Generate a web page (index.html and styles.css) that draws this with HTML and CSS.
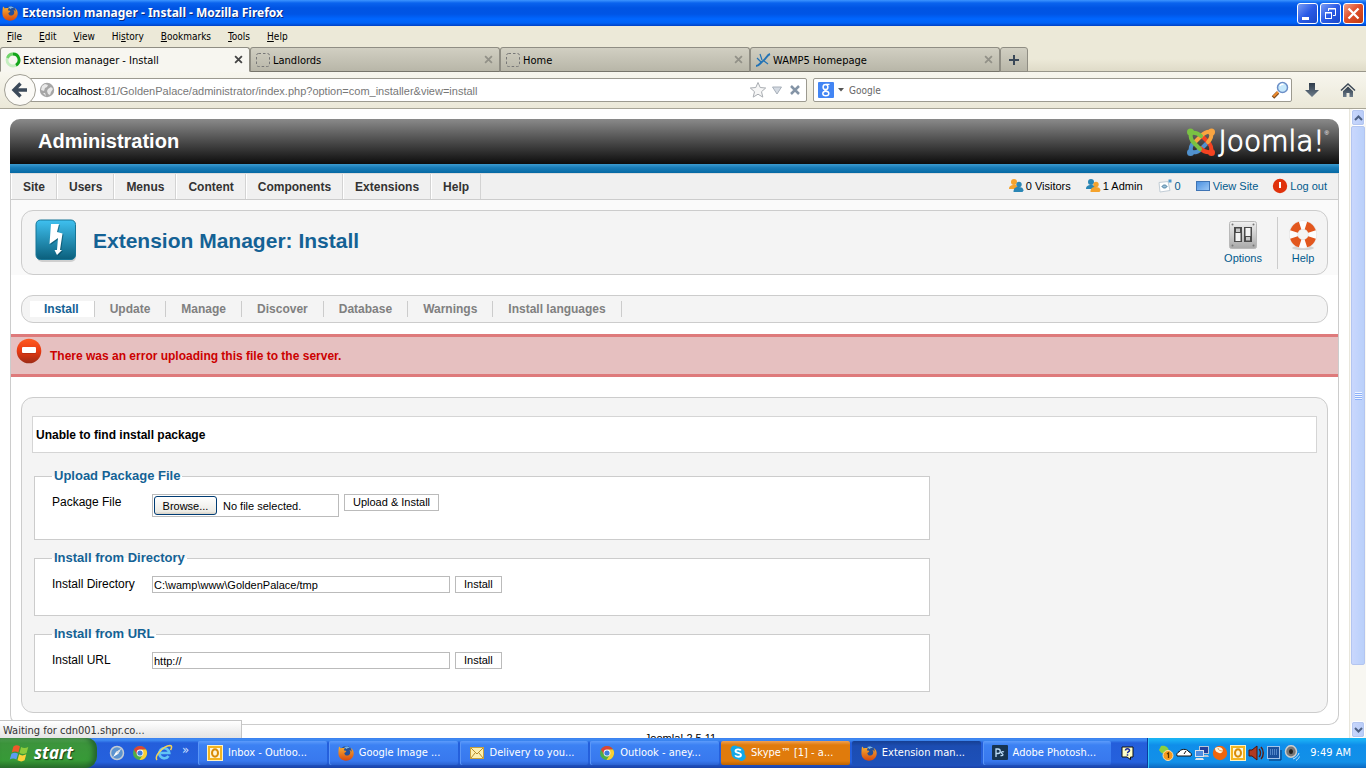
FILE: index.html
```html
<!DOCTYPE html>
<html lang="en">
<head>
<meta charset="utf-8">
<title>Extension manager - Install</title>
<link rel="stylesheet" href="styles.css">
</head>
<body>
<svg class="defs" aria-hidden="true">
  <defs>
    <linearGradient id="gFox" x1="0" y1="0" x2="0" y2="1"><stop offset="0" stop-color="#f9b233"/><stop offset="1" stop-color="#d8480d"/></linearGradient>
    <linearGradient id="gBolt" x1="0" y1="0" x2="0" y2="1"><stop offset="0" stop-color="#3fc1f0"/><stop offset="1" stop-color="#0b5f7c"/></linearGradient>
    <linearGradient id="gRed" x1="0" y1="0" x2="0" y2="1"><stop offset="0" stop-color="#ff5a20"/><stop offset=".5" stop-color="#e83a12"/><stop offset="1" stop-color="#9c2b16"/></linearGradient>
    <linearGradient id="gSteel" x1="0" y1="0" x2="0" y2="1"><stop offset="0" stop-color="#f0f0f0"/><stop offset="1" stop-color="#a8a8a8"/></linearGradient>
    <linearGradient id="gSlate" x1="0" y1="0" x2="0" y2="1"><stop offset="0" stop-color="#2e3b49"/><stop offset="1" stop-color="#6d7c8b"/></linearGradient>
    <linearGradient id="gScreen" x1="0" y1="0" x2="1" y2="1"><stop offset="0" stop-color="#4a90e0"/><stop offset="1" stop-color="#9cc8f6"/></linearGradient>
  </defs>
  <symbol id="firefox" viewBox="0 0 16 16">
    <circle cx="8.200" cy="7.500" r="6.500" fill="#24509a"/>
    <path d="M6 2c2-1 5-.6 6 1-2-.3-3 .3-3.500 1z" fill="#7ab4e6"/>
    <path d="M1 1.500c.8.500 1.500 1.300 1.800 2C4 2.800 5.500 3 7 3.500 6 4.200 5.800 5 6 5.600c1 .1 2 .2 2.300.6-.2 1-1.300 1.200-2 1.800C6.500 10.500 9 11.200 11 10c1.700-1.200 1.600-3.500.5-5 1 .3 1.800 1 2.100 2 .2-1.500-.2-3-1.200-4.300C15 4 16 6.500 15.700 9c-.5 4-3.700 6.700-7.700 6.700C3.500 15.700.4 12.500.4 8.300.4 6 .6 3.500 1 1.500z" fill="url(#gFox)"/>
  </symbol>
  <symbol id="chrome" viewBox="0 0 16 16">
    <circle cx="8" cy="8" r="7" fill="#4fae46"/>
    <path d="M1.900 4.500A7 7 0 0 1 14.100 4.500L8 5 5 9.500z" fill="#dc4437"/>
    <path d="M14.100 4.500A7 7 0 0 1 7.500 15L11 9.500 9 4.500z" fill="#f9cf35"/>
    <circle cx="8" cy="8" r="3.400" fill="#fff"/><circle cx="8" cy="8" r="2.600" fill="#3d7edb"/>
  </symbol>
  <symbol id="outlook" viewBox="0 0 16 16">
    <rect x=".5" y=".5" width="15" height="15" fill="#f4b521" stroke="#fff2c0"/>
    <rect x="3" y="3" width="10" height="10" fill="#fff6d8"/>
    <ellipse cx="8" cy="8" rx="3" ry="3.700" fill="none" stroke="#d98b06" stroke-width="2"/>
  </symbol>
  <symbol id="close" viewBox="0 0 8 8"><path d="M1 1l6 6M7 1L1 7" stroke="currentColor" stroke-width="1.600"/></symbol>
  <symbol id="blank" viewBox="0 0 16 16"><rect x="1.500" y="1.500" width="13" height="13" rx="2" fill="none" stroke="#777" stroke-dasharray="2.500 2"/></symbol>
  <symbol id="people" viewBox="0 0 16 16">
    <g fill="var(--back)"><circle cx="6" cy="4" r="3"/><path d="M1 11c0-3 2-4 5-4s5 1 5 4z"/></g>
    <g fill="var(--front)"><circle cx="11" cy="6.500" r="2.700"/><path d="M5.500 14c0-4 2-5 5-5s5 1 5 3.500l-1 1.500z"/></g>
  </symbol>
</svg>

<header class="browser">
  <div class="titlebar">
    <svg class="i16"><use href="#firefox"/></svg>
    <span class="title">Extension manager - Install - Mozilla Firefox</span>
    <div class="winbtns">
      <button aria-label="Minimize"><svg viewBox="0 0 19 19"><rect x="4" y="13" width="7" height="3" fill="#fff"/></svg></button>
      <button aria-label="Restore"><svg viewBox="0 0 19 19" fill="none" stroke="#fff"><path d="M7.500 7V4.500h7v7H12M7 5h8"/><rect x="4.500" y="8.500" width="6" height="6"/><path d="M4 9h7"/></svg></button>
      <button class="x" aria-label="Close"><svg viewBox="0 0 19 19"><path d="M4.500 4.500l10 10M14.500 4.500l-10 10" stroke="#fff" stroke-width="2.300"/></svg></button>
    </div>
  </div>
  <nav class="menubar" aria-label="Browser menu">
    <button><u>F</u>ile</button><button><u>E</u>dit</button><button><u>V</u>iew</button><button>Hi<u>s</u>tory</button><button><u>B</u>ookmarks</button><button><u>T</u>ools</button><button><u>H</u>elp</button>
  </nav>
  <div class="tabs">
    <div class="tab active"><svg class="i16" viewBox="0 0 16 16" fill="none" stroke-width="2.800"><circle cx="8" cy="8" r="6" stroke="#c5eec0"/><path d="M8 2a6 6 0 0 1 3 11.200" stroke="#14a51b"/><path d="M8 2a6 6 0 0 0-5.500 4" stroke="#72d46b"/></svg><button class="tabname">Extension manager - Install</button><button class="tabx" aria-label="Close tab"><svg><use href="#close"/></svg></button></div>
    <div class="tab"><svg class="i16"><use href="#blank"/></svg><button class="tabname">Landlords</button><button class="tabx" aria-label="Close tab"><svg><use href="#close"/></svg></button></div>
    <div class="tab"><svg class="i16"><use href="#blank"/></svg><button class="tabname">Home</button><button class="tabx" aria-label="Close tab"><svg><use href="#close"/></svg></button></div>
    <div class="tab"><svg class="i16" viewBox="0 0 16 16" fill="none" stroke="#2373b5"><path d="M1 14c3 0 4-3 7-5s4-6 7-7" stroke-width="2"/><path d="M6 10L2 6M7 8L5 2M9 9l4 3" stroke-width="1.200"/></svg><button class="tabname">WAMP5 Homepage</button><button class="tabx" aria-label="Close tab"><svg><use href="#close"/></svg></button></div>
    <button class="newtab" aria-label="New tab"><svg viewBox="0 0 12 12"><path d="M6 1v10M1 6h10" stroke="#3a4858" stroke-width="2"/></svg></button>
  </div>
  <div class="toolbar">
    <button class="back" aria-label="Back"><svg viewBox="0 0 18 18"><path d="M9.500 2.500L3 9l6.500 6.500M4 9h12" fill="none" stroke="#3c4a5a" stroke-width="3.400"/></svg></button>
    <div class="urlbox">
      <svg class="i16" viewBox="0 0 16 16"><circle cx="8" cy="8" r="7.200" fill="#a6a6a6"/><path d="M3 4l3-2 3 1-1 2-2 1-1 3-3-1zM9 7l3-2 2 2-2 3-1 3-2-1-1-3zM4 11l2 0 1 3z" fill="#e9e9e9"/></svg>
      <div class="url" role="textbox" aria-label="Address"><b>localhost</b>:81/GoldenPalace/administrator/index.php?option=com_installer&amp;view=install</div>
      <svg class="i18" viewBox="0 0 18 18"><path d="M9 1.500l2.200 5 5.500.5-4.200 3.700 1.300 5.400L9 13.200l-4.800 2.900 1.300-5.400L1.300 7l5.500-.5z" fill="#f6f6f6" stroke="#a9adb2"/></svg>
      <svg class="i16" viewBox="0 0 16 16"><path d="M3.500 5h9L8 12z" fill="#d4dae2" stroke="#a8b0ba"/></svg>
      <svg class="i16" viewBox="0 0 16 16"><path d="M4 4l8 8M12 4l-8 8" stroke="#8494a6" stroke-width="2.500"/></svg>
    </div>
    <div class="searchbox">
      <svg class="i16" viewBox="0 0 16 16"><rect width="16" height="16" rx="1" fill="#4285f4"/><ellipse cx="7.500" cy="5" rx="2.400" ry="2.600" fill="none" stroke="#fff" stroke-width="1.500"/><ellipse cx="7.800" cy="11.500" rx="3" ry="2.300" fill="none" stroke="#fff" stroke-width="1.500"/><path d="M8 2.300h3.500M7 7.500c-1 1.500 2 1 2.500 2.500" fill="none" stroke="#fff" stroke-width="1.300"/></svg>
      <svg class="caret" viewBox="0 0 6 4"><path d="M0 0h6L3 3.500z" fill="#555"/></svg>
      <input type="text" placeholder="Google" aria-label="Search">
      <svg class="i18" viewBox="0 0 18 18"><path d="M2 16.500l5-5" stroke="#7c4a1d" stroke-width="3.500"/><path d="M2.500 15.500l4.500-4.500" stroke="#f08b2c" stroke-width="2"/><circle cx="11.500" cy="6.500" r="5" fill="#c6e8fb" stroke="#6c8fc7" stroke-width="1.500"/><path d="M9 5c.5-1.500 2-2 3.500-1.500" stroke="#fff" stroke-width="1.500" fill="none"/></svg>
    </div>
    <button class="tool" aria-label="Downloads"><svg class="i16" viewBox="0 0 16 16"><path d="M5 1h6v7h4l-7 7-7-7h4z" fill="url(#gSlate)"/></svg></button>
    <button class="tool" aria-label="Home"><svg class="i16" viewBox="0 0 16 16"><path d="M1 8.500L8 2l7 6.500" fill="none" stroke="#3c4856" stroke-width="1.500"/><path d="M3 9.200L8 4.500l5 4.700V15H9.500v-4h-3v4H3z" fill="url(#gSlate)"/></svg></button>
  </div>
</header>

<div class="viewport">
  <div class="page">
    <div class="shell">
      <div class="brand">
        <span class="sitename">Administration</span>
        <div class="logo">
          <svg viewBox="0 0 30 30" fill="none" stroke-width="4" stroke-linecap="round" stroke-linejoin="round">
            <path d="M21 16l-6 6c-3 3-6 4-10 3" stroke="#5091cd"/>
            <path d="M5 25c-1-4 0-7 3-10" stroke="#5091cd"/>
            <path d="M14 21c4 4 7 5 11 4 1-4 0-7-3-10l-5-5" stroke="#f44321"/>
            <path d="M9 15l6-6c3-3 6-5 10-4 1 4 0 7-3 10" stroke="#f9a541"/>
            <path d="M15 9c-3-3-6-4-10-3-1 4 0 7 3 10l6 6" stroke="#7ac143"/>
            <g stroke="none"><circle cx="4.500" cy="5" r="3.500" fill="#7ac143"/><circle cx="25.500" cy="5" r="3.500" fill="#f9a541"/><circle cx="25.500" cy="25.500" r="3.500" fill="#f44321"/><circle cx="4.500" cy="25.500" r="3.500" fill="#5091cd"/></g>
          </svg>
          <span>Joomla!</span><sup>®</sup>
        </div>
      </div>
      <div class="stripe"></div>
      <div class="adminbar">
        <nav class="adminmenu" aria-label="Administration">
          <a href="#">Site</a><a href="#">Users</a><a href="#">Menus</a><a href="#">Content</a><a href="#">Components</a><a href="#">Extensions</a><a href="#">Help</a>
        </nav>
        <div class="status">
          <span class="st visitors"><svg class="i16"><use href="#people"/></svg>0 Visitors</span>
          <span class="st admins"><svg class="i16"><use href="#people"/></svg>1 Admin</span>
          <a class="st" href="#"><svg class="i16" viewBox="0 0 16 16"><path d="M2 4.500l9-1 2 9-10 1.500z" fill="#fff" stroke="#c2cdd6"/><path d="M5 8.500c1-2 4-2 5 0-1 2-4 2-5 0z" fill="#9cc0d8" stroke="#4c7f9f"/><rect x="11.500" y="1.500" width="3" height="3" fill="#4b98cc"/></svg>0</a>
          <a class="st" href="#"><svg class="i16" viewBox="0 0 16 16"><rect x="1.500" y="3.500" width="13" height="9" fill="url(#gScreen)" stroke="#3f74b4"/></svg>View Site</a>
          <a class="st" href="#"><svg class="i16" viewBox="0 0 16 16"><circle cx="8" cy="8" r="7.200" fill="#e0320c"/><path d="M8 4v6" stroke="#fff" stroke-width="2"/></svg>Log out</a>
        </div>
      </div>

      <section class="heading">
        <div class="headbox">
          <svg class="bolt" viewBox="0 0 42 44"><rect x="2" y="4" width="39" height="39" rx="5" fill="#000" opacity=".15"/><rect x="1" y="1" width="39.500" height="39.500" rx="4.500" fill="url(#gBolt)" stroke="#167596"/><path d="M17 6h8l-2 8 5.500 1.500L26 32h2l-5 5-2.500-5H23l1-12-8.500 6z" fill="#033c50" opacity=".5"/><path d="M16 5h8l-2 8 5.500 1.500L25 31h2l-5 5-2.500-5H22l1-12-8.500 6z" fill="#fff"/></svg>
          <h1>Extension Manager: Install</h1>
          <div class="actions">
            <a href="#"><svg viewBox="0 0 32 32"><rect x="2.500" y="2.500" width="27" height="27" rx="2" fill="url(#gSteel)" stroke="#b9b9b9"/><g fill="#777"><circle cx="5.500" cy="5.500" r="1"/><circle cx="26.500" cy="5.500" r="1"/><circle cx="5.500" cy="26.500" r="1"/><circle cx="26.500" cy="26.500" r="1"/></g><path d="M7 8h8v15H7zM17 8h8v15h-8z" fill="#4a4a4a"/><path d="M8.500 14h5v8h-5zM18.500 9h5v8h-5z" fill="#f4f4f4"/><path d="M9 9.500h4V13H9zM19 18h4v3.500h-4z" fill="#c8c8c8"/></svg>Options</a>
            <a class="help" href="#"><svg viewBox="0 0 32 32"><ellipse cx="16" cy="29" rx="11" ry="2" fill="#d4d4d4"/><circle cx="16" cy="15.500" r="9.500" fill="none" stroke="#dfdfdf" stroke-width="9"/><circle cx="16" cy="15.500" r="9.500" fill="none" stroke="#fdfdfd" stroke-width="8"/><circle cx="16" cy="15.500" r="9.500" fill="none" stroke="#e2571e" stroke-width="8" pathLength="40" stroke-dasharray="6 4" stroke-dashoffset="-2"/></svg>Help</a>
          </div>
        </div>
      </section>

      <nav class="submenu" aria-label="Extension manager">
        <a class="on" href="#">Install</a><a href="#">Update</a><a href="#">Manage</a><a href="#">Discover</a><a href="#">Database</a><a href="#">Warnings</a><a href="#">Install languages</a>
      </nav>

      <div class="error" role="alert">
        <svg viewBox="0 0 26 26"><circle cx="13" cy="13" r="12.300" fill="url(#gRed)"/><rect x="6" y="9" width="14" height="7" rx="1" fill="#a52a12" opacity=".6"/><rect x="6" y="9" width="14" height="6" rx="1" fill="#fff"/></svg>
        <span>There was an error uploading this file to the server.</span>
      </div>

      <main class="panel">
        <p class="message">Unable to find install package</p>
        <form class="forms">
          <fieldset>
            <legend>Upload Package File</legend>
            <div class="row"><label for="pkg">Package File</label>
              <div class="file"><input type="file" id="pkg"><label for="pkg" class="browse">Browse...</label><span>No file selected.</span></div>
              <button type="button">Upload &amp; Install</button></div>
          </fieldset>
          <fieldset>
            <legend>Install from Directory</legend>
            <div class="row"><label for="dir">Install Directory</label><input type="text" id="dir" value="C:\wamp\www\GoldenPalace/tmp"><button type="button">Install</button></div>
          </fieldset>
          <fieldset>
            <legend>Install from URL</legend>
            <div class="row"><label for="url">Install URL</label><input type="text" id="url" value="http://"><button type="button">Install</button></div>
          </fieldset>
        </form>
      </main>
    </div>
    <footer class="foot">Joomla! 2.5.11</footer>
  </div>
  <div class="scrollbar">
    <div class="sbtn"><svg viewBox="0 0 9 6"><path d="M1 5l3.500-3.500L8 5" fill="none" stroke="#4d6185" stroke-width="2"/></svg></div>
    <div class="thumb"><i></i></div>
    <div class="track"></div>
    <div class="sbtn"><svg viewBox="0 0 9 6"><path d="M1 1l3.500 3.500L8 1" fill="none" stroke="#4d6185" stroke-width="2"/></svg></div>
  </div>
  <div class="waiting">Waiting for cdn001.shpr.co...</div>
</div>

<footer class="taskbar">
  <button class="start"><svg viewBox="0 0 20 20"><path d="M4 4c2-1.500 4-1.500 6 0L8.500 9.500c-2-1.300-4-1.300-6 0z" fill="#f0592a"/><path d="M11 4.500c2 1.300 4 1.300 6.500 0L16 10c-2 1.300-4 1.300-6.500 0z" fill="#8ccb3c"/><path d="M2.200 10.700c2-1.300 4-1.300 6 0L6.700 16c-2-1.300-4-1.300-6 0z" fill="#5c9cf2"/><path d="M9.200 11.200c2 1.300 4 1.300 6.500 0l-1.500 5.500c-2 1.300-4 1.300-6.500 0z" fill="#fbd13a"/></svg>start</button>
  <div class="quick">
    <button aria-label="Safari"><svg class="i16" viewBox="0 0 16 16"><circle cx="8" cy="8" r="6.500" fill="#5c93cf" stroke="#c3cbd5" stroke-width="1.500"/><path d="M12 4L9 9 4 12l3-5z" fill="#fff"/><path d="M12 4L9 9 7 7z" fill="#d8dde4"/></svg></button>
    <button aria-label="Chrome"><svg class="i16"><use href="#chrome"/></svg></button>
    <button aria-label="Internet Explorer"><svg class="i18" viewBox="0 0 18 18"><path d="M13.500 12a5 5 0 1 1 .8-3H5" fill="none" stroke="#62c3f5" stroke-width="2.700"/><path d="M2 16C-1 12 8 2 15 1.500c2.500 0 1.500 3 .5 4.500" fill="none" stroke="#f7d253" stroke-width="1.500"/></svg></button>
    <span class="more">»</span>
  </div>
  <div class="tasks">
    <button><svg class="i16"><use href="#outlook"/></svg>Inbox - Outloo...</button>
    <button><svg class="i16"><use href="#firefox"/></svg>Google Image ...</button>
    <button><svg class="i16" viewBox="0 0 16 16"><rect x="1.500" y="2.500" width="13" height="11" fill="#fdf0b0" stroke="#c9a13c"/><path d="M2 3l6 6 6-6M2 13l4-5M14 13l-4-5" fill="none" stroke="#b78d2f"/></svg>Delivery to you...</button>
    <button><svg class="i16"><use href="#chrome"/></svg>Outlook - aney...</button>
    <button class="flash"><svg class="i16" viewBox="0 0 16 16"><path d="M4.500.5a4 4 0 0 1 3 1A6.500 6.500 0 0 1 14.500 9a4 4 0 0 1-6 5.500A6.500 6.500 0 0 1 1.500 7 4 4 0 0 1 4.500.5z" fill="#12a8e8"/><path d="M10.800 5.500C10 3.800 5.500 3.800 5.500 6c0 2.500 5.500 1.300 5.500 4 0 2.300-5 2.300-5.800.2" fill="none" stroke="#fff" stroke-width="1.800"/></svg>Skype™ [1] - a...</button>
    <button class="pressed"><svg class="i16"><use href="#firefox"/></svg>Extension man...</button>
    <button><svg class="i16" viewBox="0 0 16 16"><rect width="16" height="15" rx="1" fill="#173450"/><path d="M4 12V4h2a2 2 0 0 1 0 4.500H4M12 7c-2-1-3.500.5-2 1.500s1.500 2.500-1.500 2" fill="none" stroke="#bcdcf7" stroke-width="1.300"/></svg>Adobe Photosh...</button>
  </div>
  <svg class="helpicon" viewBox="0 0 14 14"><path d="M1 1h11v10H9.500v2.500L6 11H1z" fill="#ffffc8" stroke="#111"/><path d="M4.500 4.500c0-2.500 4-2.500 4 0 0 1.300-2 1-2 2.700M6.500 8.200v1.500" fill="none" stroke="#1a2a9a" stroke-width="1.500"/></svg>
  <div class="tray">
    <svg class="i16" viewBox="0 0 16 16"><path d="M3 1c5-1 8 2 8 6-4 3-8 2-10-2z" fill="#8bcf3f"/><circle cx="10" cy="10.500" r="5" fill="#f79a1e" stroke="#ffe0a8"/><path d="M9 9l1.500-1v5" fill="none" stroke="#5b3300" stroke-width="1.300"/></svg>
    <svg class="i16" viewBox="0 0 16 16"><path d="M1 11c-1-2 1-4 2-4 1-3 8-4 10 0 2 0 3 3 2 4z" fill="#fff" stroke="#111"/><path d="M8 9l2-3" stroke="#111"/></svg>
    <svg class="i16" viewBox="0 0 16 16"><rect x="5.500" y="1.500" width="9" height="7" fill="#223f9c" stroke="#b8c5d6"/><path d="M8 10h6l1 2H8z" fill="#b8c5d6"/><rect x="1.500" y="5.500" width="8" height="6" fill="#4f8de0" stroke="#dde4ec"/><path d="M2 13h7l1 2H1z" fill="#dde4ec"/></svg>
    <svg class="i16" viewBox="0 0 16 16"><circle cx="8" cy="8" r="7.200" fill="#ee650c"/><path d="M3 3c3-2 7-1 8 2 0 3-3 4-5 2.500C4 7 3 5.500 3 3z" fill="#fff3dc"/><path d="M6 3c0 2 2 3 5 3" stroke="#e4a055" fill="none"/></svg>
    <svg class="i16"><use href="#outlook"/></svg>
    <svg class="i16" viewBox="0 0 16 16"><path d="M1 5h3l5-4v14l-5-4H1z" fill="#b03a24" stroke="#4f120b"/><path d="M11 4c2 2 2 6 0 8M13 2c3 3 3 9 0 12" fill="none" stroke="#5c1c12" stroke-width="1.400"/></svg>
    <svg class="i16" viewBox="0 0 16 16"><rect x="1.500" y="1.500" width="12" height="12" fill="#1b519d" stroke="#a4c4e8"/><path d="M4 5h7M4 7h7M4 9h7" stroke="#8cbdf2" stroke-dasharray="1 1"/><path d="M3 15h12V5" stroke="#0b2e6b" fill="none"/></svg>
    <svg class="i16" viewBox="0 0 16 16"><ellipse cx="7" cy="6.500" rx="5.500" ry="5.800" fill="#777" stroke="#ccc" stroke-width="1.500"/><ellipse cx="7" cy="6.500" rx="2" ry="2.500" fill="#222"/><path d="M9 14c3-1 5-3 6-6M12 15.500c2-1 3-3 3.500-4" fill="none" stroke="#c6e2fb"/></svg>
    <time>9:49 AM</time>
  </div>
</footer>
</body>
</html>
```
FILE: styles.css
```css
* { box-sizing: border-box; }
html, body { height: 100%; margin: 0; }
body {
  display: flex;
  flex-direction: column;
  overflow: hidden;
  background: #fff;
  color: #000;
  font: 11px/14px "Liberation Sans", Arial, sans-serif;
}
button, input { font: inherit; color: inherit; margin: 0; }
button { padding: 0; border: 0; background: none; white-space: nowrap; }
a { color: #025a8d; text-decoration: none; }
svg { display: block; flex: none; }
.defs { position: absolute; width: 0; height: 0; }
.i16 { width: 16px; height: 16px; }
.i18 { width: 18px; height: 18px; }

/* Browser window */
.browser, .taskbar, .waiting { font-family: "DejaVu Sans Condensed", "Liberation Sans", sans-serif; font-size: 11px; }
.browser { flex: none; background: #ece9d8; }
.titlebar {
  display: flex;
  align-items: center;
  gap: 4px;
  height: 26px;
  padding: 0 2px;
  background: linear-gradient(#3d95ff 0, #0a63ee 3px, #0054e3 8px, #0055e5 14px, #0066ff 19px, #0062f5 23px, #0040c4 26px);
}
.title { color: #fff; font: bold 12px/16px "Noto Sans", "Open Sans", sans-serif; text-shadow: 1px 1px 0 #0a2a80; }
.winbtns { display: flex; gap: 2px; margin-left: auto; }
.winbtns button { width: 21px; height: 21px; border: 1px solid #fff; border-radius: 3px; background: linear-gradient(135deg, #7a9cf4, #2a5be6 50%, #1a48c8); }
.winbtns .x { background: linear-gradient(135deg, #f0a088, #e0502c 45%, #c03a10); }
.menubar { display: flex; gap: 17px; height: 21px; padding: 0 7px; align-items: center; font-size: 10px; }
.tabs { display: flex; height: 25px; background: linear-gradient(#ece9d8 12px, #dfdbc8); border-bottom: 1px solid #98968a; }
.tab {
  display: flex;
  align-items: center;
  width: 250px;
  height: 25px;
  padding: 0 6px 0 4px;
  border: 1px solid #8f8d83;
  border-bottom-color: #77756b;
  border-radius: 3px 3px 0 0;
  background: linear-gradient(#d1cfc2, #b8b6a8);
  color: #929188;
}
.tab.active { background: #f7f6f0; border-bottom-color: #f7f6f0; color: #444; }
.tabname { flex: 1; text-align: left; color: #000; padding: 2px 0 0 2px; }
.tabx svg { width: 9px; height: 9px; }
.newtab { display: grid; place-items: center; width: 28px; height: 25px; border: 1px solid #8f8d83; border-radius: 3px 3px 0 0; background: linear-gradient(#d1cfc2, #b8b6a8); }
.newtab svg { width: 12px; height: 12px; }
.toolbar { display: flex; align-items: center; height: 37px; padding: 0 10px 0 4px; background: linear-gradient(#f7f6ee, #ebe8d8); border-bottom: 1px solid #a8a597; }
.back { z-index: 1; display: grid; place-items: center; width: 32px; height: 32px; border: 1px solid #a09e94; border-radius: 50%; background: #fbfaf6; }
.back svg { width: 18px; height: 18px; }
.urlbox, .searchbox { display: flex; align-items: center; height: 24px; border: 1px solid #9c9a90; border-radius: 2px; background: #fff; }
.urlbox { flex: 790 1 0; gap: 2px; margin-left: -8px; padding: 0 3px 0 10px; }
.url { flex: 1; padding: 2px 0 0 1px; color: #777; font-family: "Liberation Sans", Arial, sans-serif; overflow: hidden; white-space: nowrap; }
.url b { color: #000; font-weight: normal; }
.searchbox { flex: 487 1 0; margin: 0 12px 0 6px; padding: 0 2px 0 4px; }
.caret { width: 6px; height: 4px; margin: 0 5px 0 4px; }
.searchbox input { flex: 1; border: 0; outline: 0; padding: 2px 0 0; background: none; font-size: 10px; }
.searchbox input::placeholder { color: #666; opacity: 1; }
.tool + .tool { margin-left: 20px; }

/* Scrolled page */
.viewport { position: relative; flex: 1; min-height: 0; display: flex; overflow: hidden; }
.page { flex: 1; padding: 10px; }
.shell { border: 1px solid #ccc; border-top: 0; border-radius: 10px; }
.brand, .stripe, .adminbar, .heading { margin: 0 -1px; }
.brand {
  display: flex;
  align-items: center;
  justify-content: space-between;
  height: 45px;
  padding: 0 10px 0 28px;
  border-radius: 10px 10px 0 0;
  background: linear-gradient(#8a8a8a, #4b4b4b 50%, #0d0d0d);
  color: #fff;
}
.sitename { font: bold 20px/24px "Liberation Sans", Arial, sans-serif; padding-bottom: 2px; }
.logo { display: flex; align-items: center; }
.logo svg { width: 30px; height: 30px; margin-right: 3px; }
.logo span { font: 200 28px/30px "DejaVu Sans", "DejaVu Sans Light", sans-serif; -webkit-text-stroke: 1px #fff; }
.logo sup { align-self: flex-start; font-size: 6px; line-height: 12px; }
.stripe { height: 9px; background: linear-gradient(#3b9bd0, #1a7db8 40%, #0569a4); }
.adminbar { display: flex; justify-content: space-between; height: 27px; border: 1px solid #ccc; border-top-color: #ddd; background: #f0f0f0; }
.adminmenu { display: flex; }
.adminmenu a { padding: 1px 11px 0; border-right: 1px solid #d3d3d3; border-left: 1px solid #fff; color: #333; font-weight: bold; font-size: 12px; line-height: 25px; }
.status { display: flex; align-items: center; gap: 14px; padding: 0 11px 2px 0; }
.st { display: flex; align-items: center; gap: 2px; }
.visitors { --back: #f5a32c; --front: #2a86b5; }
.admins { --back: #2a86b5; --front: #f5a32c; }
.heading { padding: 10px 10px 0; border: solid #ccc; border-width: 0 1px; background: #fafafa; }
.headbox, .submenu, .panel { border: 1px solid #ccc; border-radius: 12px; background: #f4f4f4; }
.headbox { display: flex; align-items: center; height: 65px; padding: 0 8px 0 13px; }
.bolt { width: 42px; height: 44px; align-self: flex-start; margin-top: 8px; }
h1 { flex: 1; margin: 0; padding: 0 0 4px 16px; color: #146295; font-size: 21px; line-height: 26px; }
.actions { display: flex; text-align: center; }
.actions a { display: flex; flex-direction: column; align-items: center; height: 52px; padding: 2px 15px 0; line-height: 14px; }
.actions svg { width: 32px; height: 32px; }
.actions .help { border-left: 1px solid #ccc; padding: 2px 0 0 9px; }
.submenu { display: flex; align-items: center; height: 28px; margin: 20px 10px 11px; padding: 0 8px; }
.submenu a { padding: 0 15px; border-right: 1px solid #ccc; color: #808080; font-weight: bold; font-size: 12px; line-height: 16px; }
.submenu .on { background: #fff; color: #146295; padding-left: 14px; }
.error { display: flex; align-items: flex-start; gap: 8px; padding: 1px 5px 0; height: 43px; border: solid #de7a7b; border-width: 3px 0; background: #e6c0c0; color: #c00; font-weight: bold; font-size: 12px; }
.error svg { width: 26px; height: 26px; }
.error span { padding-top: 10px; line-height: 16px; }
.panel { margin: 20px 10px 11px; padding: 18px 10px 20px; }
.message { margin: 0 0 15px; padding: 1px 3px 0; border: 1px solid #d5d5d5; background: #fff; line-height: 34px; font-weight: bold; font-size: 12px; }
.forms { width: 70%; }
fieldset { margin: 0 2px 10px; padding: 10px 17px 0; border: 1px solid #ccc; background: #fff; height: 66px; }
fieldset:first-of-type { height: 72px; }
fieldset:last-of-type { margin-bottom: 0; }
legend { padding: 0 2px; color: #146295; font-size: 13px; font-weight: bold; line-height: 16px; }
.row { display: flex; align-items: flex-start; gap: 5px; }
.row > label { width: 95px; font-size: 12px; line-height: 16px; }
.row > input, .row > button { height: 17px; border: 1px solid #bbb; background: #fff; line-height: 15px; }
.row > input { width: 298px; padding: 0 1px; }
.row > button { padding: 0 8px; }
.file { display: flex; align-items: center; gap: 6px; width: 187px; height: 23px; border: 1px solid #bbb; padding: 0 1px; }
.file input { position: absolute; opacity: 0; width: 1px; height: 1px; }
.browse { width: 63px; height: 19px; border: 1px solid #003c74; border-radius: 3px; background: linear-gradient(#fff, #ecebe5 85%, #d6d0c5); text-align: center; line-height: 18px; }
.foot { padding: 6px 0 0 12px; text-align: center; }

.scrollbar { display: flex; flex-direction: column; width: 17px; padding: 0 1px; background: #f8f7f2; border-left: 1px solid #e8e6dc; }
.sbtn { display: grid; place-items: center; height: 17px; border: 1px solid #fff; border-radius: 3px; background: linear-gradient(90deg, #c9d7fc, #b8ccf8); outline: 1px solid #b4c6f0; outline-offset: -2px; }
.sbtn svg { width: 9px; height: 6px; }
.thumb { flex: 538; display: grid; place-items: center; border: 1px solid #b3c5f0; border-radius: 2px; background: linear-gradient(90deg, #c9d7fd, #b9d0fa); }
.thumb i { width: 7px; height: 8px; background: repeating-linear-gradient(#f0f5ff 0 1px, #8cb0f8 1px 2px); }
.track { flex: 56; }
.waiting { position: absolute; left: 0; bottom: 0; width: 242px; padding: 3px 3px 0; border: solid #c5c5c5; border-width: 1px 1px 0 0; background: linear-gradient(#fff, #e4e4e4); color: #333; }

/* Taskbar */
.taskbar { flex: none; display: flex; align-items: center; height: 30px; color: #fff; background: linear-gradient(#3a80f0 0, #3f8cf3 2px, #245edb 5px, #2561dd 24px, #1941a5 30px); }
.start {
  display: flex;
  align-items: center;
  gap: 3px;
  width: 97px;
  height: 30px;
  padding-left: 9px;
  border-radius: 0 10px 12px 0;
  background: linear-gradient(#5bab5b, #3c943c 5px, #379a37 22px, #2a722a);
  box-shadow: inset -4px 0 5px #24652e;
  font: italic bold 17px/22px "Open Sans", "Noto Sans", sans-serif;
  text-shadow: 1px 1px 1px #173d17;
}
.start svg { width: 22px; height: 22px; }
.quick { display: flex; align-items: center; gap: 7px; width: 101px; padding-left: 12px; }
.more { align-self: flex-start; padding-left: 2px; color: #cfe0ff; font-size: 13px; line-height: 12px; }
.tasks { flex: 1; min-width: 0; display: flex; gap: 2px; }
.tasks button { flex: 1; min-width: 0; display: flex; align-items: center; gap: 5px; height: 24px; padding-left: 9px; border-radius: 2px; background: linear-gradient(#5c9bfb, #3c81f3 4px, #3878ee 20px, #2b62d0); box-shadow: inset 1px 0 #5a96f7; }
.tasks .flash { background: linear-gradient(#f0a050, #e07b0c 4px, #e07b0c 20px, #bb6200); box-shadow: none; }
.tasks .pressed { background: linear-gradient(#163f93, #1c4db2 5px, #1d50b9); box-shadow: none; }
.helpicon { width: 14px; height: 14px; margin: 0 12px 0 10px; }
.tray { display: flex; align-items: center; gap: 2px; height: 30px; padding: 0 15px 0 10px; border-left: 1px solid #0a3b9e; background: linear-gradient(#18b4f2 0, #1aaef4 2px, #0f8eea 7px, #1290e8 24px, #0c68c0); box-shadow: inset 1px 0 #34c4f8; }
.tray time { margin-left: 8px; }
```
